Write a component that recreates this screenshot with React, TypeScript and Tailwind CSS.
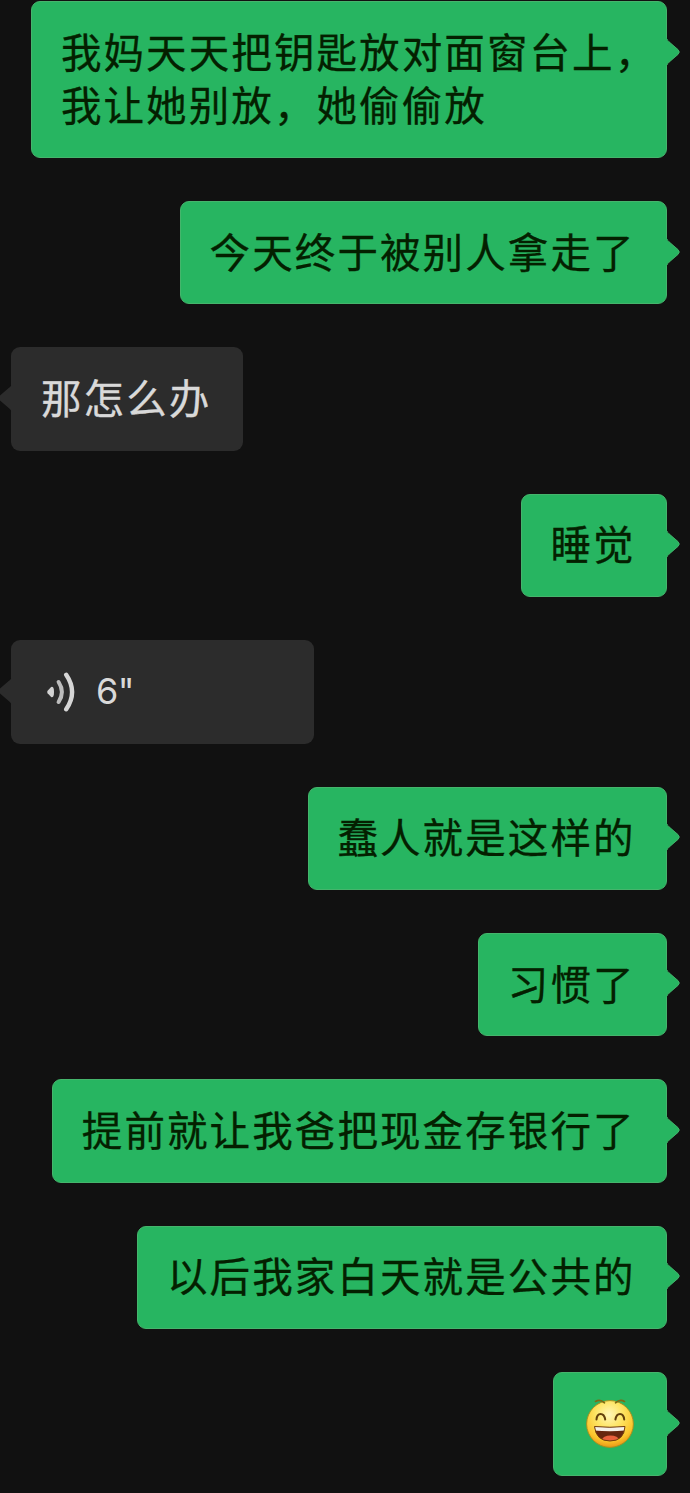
import type { ReactNode } from "react";
import clsx from "clsx";

type Message = {
  id: number;
  from: "me" | "them";
  kind: "text" | "voice" | "emoji";
  text?: string;
  seconds?: number;
};

const MESSAGES: Message[] = [
  { id: 1, from: "me", kind: "text", text: "我妈天天把钥匙放对面窗台上，\n我让她别放，她偷偷放" },
  { id: 2, from: "me", kind: "text", text: "今天终于被别人拿走了" },
  { id: 3, from: "them", kind: "text", text: "那怎么办" },
  { id: 4, from: "me", kind: "text", text: "睡觉" },
  { id: 5, from: "them", kind: "voice", seconds: 6 },
  { id: 6, from: "me", kind: "text", text: "蠢人就是这样的" },
  { id: 7, from: "me", kind: "text", text: "习惯了" },
  { id: 8, from: "me", kind: "text", text: "提前就让我爸把现金存银行了" },
  { id: 9, from: "me", kind: "text", text: "以后我家白天就是公共的" },
  { id: 10, from: "me", kind: "emoji" },
];

function Tail({ mine }: { mine: boolean }) {
  return (
    <svg
      viewBox="0 0 14 30"
      className={clsx(
        "absolute h-[30px] w-[14px]",
        mine ? "top-[34.5px] -right-[14px] text-[#27b561]" : "top-[36px] -left-[13px] -scale-x-100 text-[#2c2c2c]"
      )}
    >
      <path
        d="M0 0 C0.5 2.5 1.5 3.6 3 4.8 L12 12.6 Q14.6 15 12 17.4 L3 25.2 C1.5 26.4 0.5 27.5 0 30 Z"
        fill="currentColor"
      />
      {mine && (
        <path
          d="M1 2 C1.5 3.2 2 4 3 4.8 L12 12.6 Q14.6 15 12 17.4 L3 25.2 C2 26 1.5 26.8 1 28"
          fill="none"
          stroke="#45b56c"
          strokeWidth="0.9"
        />
      )}
    </svg>
  );
}

function VoiceIcon() {
  return (
    <svg viewBox="0 0 30 40" className="h-[40px] w-[30px] shrink-0" fill="none" strokeLinecap="round">
      <path
        d="M1.6 18.8 L5.1 14.9 Q7.2 14 7.8 17 Q8.2 20 7.8 23 Q7.2 26 5.1 25.1 L1.6 21.2 Q0.6 20 1.6 18.8 Z"
        fill="#d2d2d2"
      />
      <path d="M12.6 10 Q19.2 20 12.6 30" stroke="#bcbcbc" strokeWidth="4" />
      <path d="M20.2 2.7 Q32 20 20.2 37.3" stroke="#d6d6d6" strokeWidth="4.4" />
    </svg>
  );
}

function GrinEmoji() {
  return (
    <svg viewBox="0 0 50 50" className="ml-[2px] h-[50px] w-[50px]" fill="none">
      <defs>
        <radialGradient id="face" cx="0.48" cy="0.3" r="0.72">
          <stop offset="0" stopColor="#fff6b8" />
          <stop offset="0.4" stopColor="#fee565" />
          <stop offset="0.78" stopColor="#fbc52b" />
          <stop offset="1" stopColor="#e98f13" />
        </radialGradient>
        <clipPath id="mouth">
          <path d="M9.5 27.5 Q25 29 40 27.5 Q39 42 25 42 Q11 42 9.5 27.5 Z" />
        </clipPath>
      </defs>
      <circle cx="25" cy="25" r="23.4" fill="url(#face)" stroke="#a6911f" strokeWidth="1" />
      <g stroke="#7d6a14" strokeWidth="1.6" strokeLinecap="round">
        <path d="M10.5 2.5 Q15 -0.3 19.5 3.8" />
        <path d="M30.5 3.8 Q35 -0.3 39.5 2.5" />
      </g>
      <g stroke="#63400b" strokeWidth="2" strokeLinecap="round">
        <path d="M11.5 20.5 C12 13 19 13 20.2 20.5" />
        <path d="M30.4 20.5 C31.6 13 38.6 13 39.2 20.5" />
      </g>
      <g clipPath="url(#mouth)">
        <rect x="8" y="25" width="34" height="19" fill="#66260f" />
        <path d="M8 25 H42 V31.4 Q25 33 8 31.4 Z" fill="#f5f1e9" />
        <ellipse cx="25.5" cy="41" rx="8.5" ry="4.5" fill="#e8603d" />
      </g>
      <path d="M9.5 27.5 Q25 29 40 27.5 Q39 42 25 42 Q11 42 9.5 27.5 Z" stroke="#75400c" strokeWidth="1" />
    </svg>
  );
}

function Bubble({ mine, className, children }: { mine: boolean; className?: string; children: ReactNode }) {
  return (
    <div
      className={clsx(
        "relative flex min-h-[103.4px] flex-col justify-center rounded-[9px]",
        mine
          ? "mr-[23px] border border-[#45b56c] bg-[#27b561] pl-[29.4px] text-[#042000]"
          : "ml-[10.5px] bg-[#2c2c2c] pl-[31px] text-[#d9d9d9]",
        className
      )}
    >
      <Tail mine={mine} />
      {children}
    </div>
  );
}

function MessageRow({ message }: { message: Message }) {
  const mine = message.from === "me";
  const multiline = message.text?.includes("\n");

  return (
    <li className={clsx("flex", mine ? "justify-end" : "justify-start")}>
      {message.kind === "text" && (
        <Bubble mine={mine} className={multiline ? "h-[157px] w-[636px]" : mine ? "pr-[30.4px]" : "pr-[31.6px]"}>
          <p className="-ml-[0.5px] pb-[5px] text-[40.5px] leading-[53px] tracking-[2.1px] whitespace-pre [-webkit-text-stroke:0.3px_currentColor]">
            {message.text}
          </p>
        </Bubble>
      )}
      {message.kind === "voice" && (
        <Bubble mine={mine} className="w-[303px]">
          <div className="flex items-center gap-[20px] pl-[4.5px]">
            <VoiceIcon />
            <span className="font-[Inter,sans-serif] text-[36px] leading-[53px] tracking-[-0.6px]">
              {message.seconds}"
            </span>
          </div>
        </Bubble>
      )}
      {message.kind === "emoji" && (
        <Bubble mine={mine} className="w-[114px]">
          <GrinEmoji />
        </Bubble>
      )}
    </li>
  );
}

export default function App() {
  return (
    <main className="h-[1493px] w-[690px] overflow-hidden bg-[#111111] pt-px font-['Noto_Sans_CJK_SC',sans-serif]">
      <ul lang="zh-CN" className="flex flex-col gap-[43px]">
        {MESSAGES.map((message) => (
          <MessageRow key={message.id} message={message} />
        ))}
      </ul>
    </main>
  );
}
